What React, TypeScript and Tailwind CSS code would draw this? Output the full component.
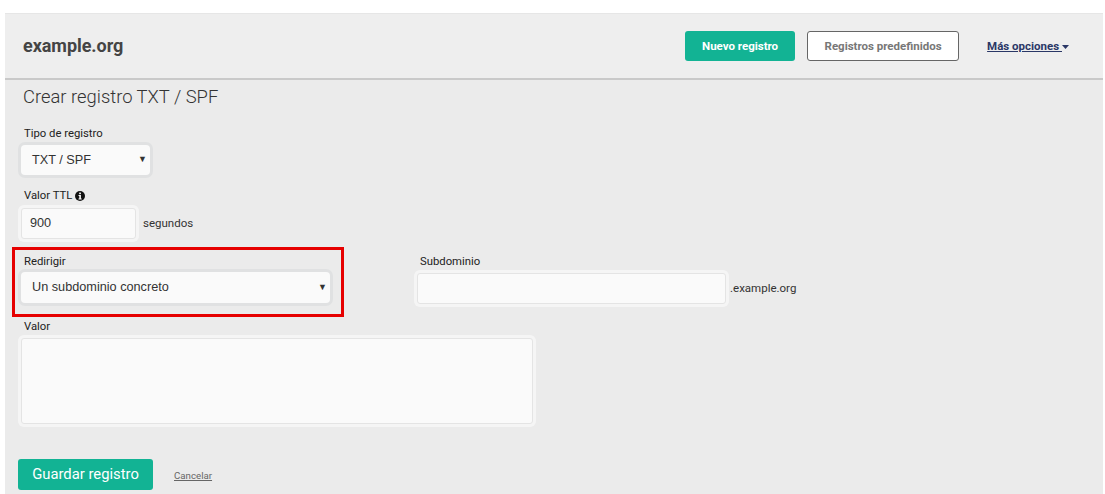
import React from "react";

const labelCls = "block text-[11.3px] leading-[14px] text-[#222]";
const field = "bg-[#fafafa] rounded-[3px] border border-[#e4e4e4] shadow-[0_0_0_3px_#f5f5f5]";
const selectShadow = "bg-[#fafafa] rounded-[4px] shadow-[0_0_0_3px_#e0e1e2]";
const controlFont = "font-['Liberation_Sans',sans-serif] text-[12.7px] text-[#333]";

function SelectBox({ text, className }: { text: string; className: string }) {
  return (
    <div className={`${selectShadow} ${controlFont} ${className} flex items-center justify-between pl-[11px] pr-[3px]`}>
      <span className="pt-[1px]">{text}</span>
      <span className="text-[9px] text-[#333]">▼</span>
    </div>
  );
}

export default function App() {
  return (
    <div className="h-[494px] overflow-hidden bg-white pt-[13px] pl-[5px] pr-[2px] font-['Roboto',sans-serif]">
      <header className="h-[67px] bg-[#eeeeee] border-t border-[#e6e6e6] border-b-2 border-b-[#c9c9c9] flex items-center pl-[18px]">
        <span className="text-[18px] -tracking-[0.05px] font-bold text-[#444] -mt-[2px]">example.org</span>
        <div className="ml-auto flex items-center">
          <button className="w-[110px] h-[30px] pt-[1px] bg-[#12b394] rounded-[3px] text-white text-[11.5px] font-bold">Nuevo registro</button>
          <button className="w-[152px] h-[30px] pt-[1px] ml-[12px] bg-white border border-[#666] rounded-[3px] text-[#777] text-[11.5px] font-bold">Registros predefinidos</button>
          <a className="ml-[28px] mr-[34px] mt-[1px] text-[11.5px] font-bold text-[#2a3766] underline flex items-center">
            Más opciones&nbsp;
            <svg width="7" height="4" viewBox="0 0 7 4"><path d="M0 0h7L3.5 4z" fill="#2a3766" /></svg>
          </a>
        </div>
      </header>
      <main className="relative h-[414px] bg-[#ebebeb]">
        <h1 className="pl-[18px] pt-[6px] text-[18.4px] leading-[22px] font-light text-[#333]">Crear registro TXT / SPF</h1>

        <label className={`${labelCls} pl-[19px] mt-[19px]`}>Tipo de registro</label>
        <div className="pl-[16px] mt-[4px]">
          <SelectBox text="TXT / SPF" className="w-[129px] h-[30px]" />
        </div>

        <label className={`${labelCls} pl-[19px] mt-[14px] flex items-center gap-[3px]`}>
          Valor TTL
          <svg width="10" height="10" viewBox="0 0 10 10">
            <circle cx="5" cy="5" r="5" fill="#111" />
            <rect x="4.2" y="1.6" width="1.7" height="1.6" fill="#fff" />
            <path d="M3.5 4h2.4v3.5h.8v1H3.5v-1h.8V5h-.8z" fill="#fff" />
          </svg>
        </label>
        <div className="pl-[16px] mt-[5px] flex items-center">
          <div className={`${field} ${controlFont} w-[115px] h-[31px] flex items-center pl-[8px] pt-[1px]`}>900</div>
          <span className="ml-[7px] text-[11.5px] text-[#333]">segundos</span>
        </div>

        <div className="flex mt-[16px]">
          <div className="w-[395px] shrink-0">
            <label className={`${labelCls} pl-[19px]`}>Redirigir</label>
            <div className="pl-[16px] mt-[3px]">
              <SelectBox text="Un subdominio concreto" className="w-[309px] h-[31px]" />
            </div>
          </div>
          <div>
            <label className={`${labelCls} pl-[20px]`}>Subdominio</label>
            <div className="pl-[17px] mt-[4px] flex items-center">
              <div className={`${field} w-[309px] h-[31px]`} />
              <span className="ml-[4px] text-[11.5px] text-[#333]">.example.org</span>
            </div>
          </div>
        </div>

        <label className={`${labelCls} pl-[19px] mt-[16px]`}>Valor</label>
        <div className="pl-[16px] mt-[4px]">
          <div className={`${field} w-[512px] h-[86px]`} />
        </div>

        <div className="pl-[13px] mt-[35px] flex items-center">
          <button className="w-[135px] h-[31px] bg-[#12b394] rounded-[3px] text-white text-[14.8px]">Guardar registro</button>
          <a className="ml-[21px] mt-[4px] text-[9.7px] text-[#666] underline">Cancelar</a>
        </div>

        <div className="absolute left-[7px] top-[167px] w-[332px] h-[70px] border-[3px] border-[#e60000]" />
      </main>
    </div>
  );
}
